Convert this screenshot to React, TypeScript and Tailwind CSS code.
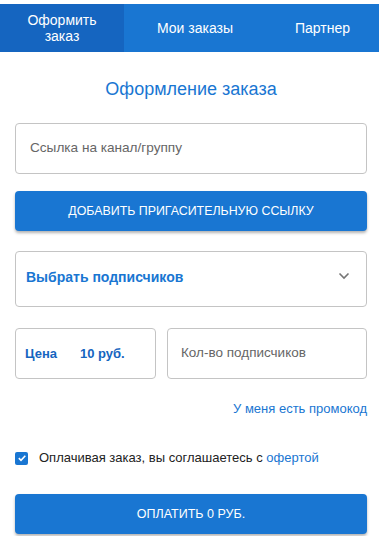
import React from "react";

export default function App() {
  return (
    <div className="w-[379px] h-[536px] bg-white pt-[4px] overflow-hidden" style={{ fontFamily: "'Liberation Sans', Arial, sans-serif" }}>
      <div className="flex h-[48px] bg-[#1976d2] text-white text-[14px]">
        <div className="w-[124px] bg-[#1565c0] flex items-center justify-center text-center leading-[16px]">
          Оформить<br />заказ
        </div>
        <div className="w-[142px] flex items-center justify-center">Мои заказы</div>
        <div className="flex-1 flex items-center justify-center">Партнер</div>
      </div>
      <div className="pl-[15px] pr-[12px]">
        <div className="mt-[25px] h-[24px] flex items-center justify-center text-[18px] text-[#1976d2]">
          Оформление заказа
        </div>
        <div className="mt-[22px] h-[51px] border border-[#c4c4c4] rounded-[4px] flex items-center px-[14px] text-[13.6px] text-[#666]">
          Ссылка на канал/группу
        </div>
        <div className="mt-[17px] h-[40px] rounded-[4px] bg-[#1976d2] text-white text-[12.4px] uppercase flex items-center justify-center shadow-[0_2px_3px_rgba(0,0,0,0.3)]">
          Добавить пригасительную ссылку
        </div>
        <div className="mt-[20px] h-[56px] border border-[#c4c4c4] rounded-[4px] flex items-start justify-between pl-[10px] pr-[16px] pt-[15px]">
          <span className="text-[14px] font-bold text-[#1976d2]">Выбрать подписчиков</span>
          <svg width="12" height="8" viewBox="0 0 12 8" className="mt-[5px]">
            <path d="M1.5 1.5 L6 6 L10.5 1.5" fill="none" stroke="#757575" strokeWidth="1.6" />
          </svg>
        </div>
        <div className="mt-[21px] flex gap-[11px]">
          <div className="w-[141px] h-[51px] border border-[#c4c4c4] rounded-[4px] flex items-center pl-[9px] text-[13px] font-bold text-[#1565c0]">
            <span>Цена</span>
            <span className="ml-[23px]">10 руб.</span>
          </div>
          <div className="flex-1 h-[51px] border border-[#c4c4c4] rounded-[4px] flex items-center pl-[13px] text-[13.5px] text-[#666]">
            Кол-во подписчиков
          </div>
        </div>
        <div className="mt-[21px] h-[18px] flex items-center justify-end text-[13px] text-[#1976d2]">
          У меня есть промокод
        </div>
        <div className="mt-[31px] h-[18px] flex items-center text-[13px] text-[#222]">
          <div className="w-[13px] h-[13px] rounded-[2px] bg-[#1976d2] flex items-center justify-center">
            <svg width="10" height="10" viewBox="0 0 10 10">
              <path d="M1.8 5.2 L4 7.3 L8.3 2.8" fill="none" stroke="white" strokeWidth="1.6" />
            </svg>
          </div>
          <span className="ml-[11px]">
            Оплачивая заказ, вы соглашаетесь с <span className="text-[#1976d2]">офертой</span>
          </span>
        </div>
        <div className="mt-[27px] h-[40px] rounded-[4px] bg-[#1976d2] text-white text-[12.5px] uppercase flex items-center justify-center shadow-[0_2px_3px_rgba(0,0,0,0.3)]">
          Оплатить 0 руб.
        </div>
      </div>
    </div>
  );
}
